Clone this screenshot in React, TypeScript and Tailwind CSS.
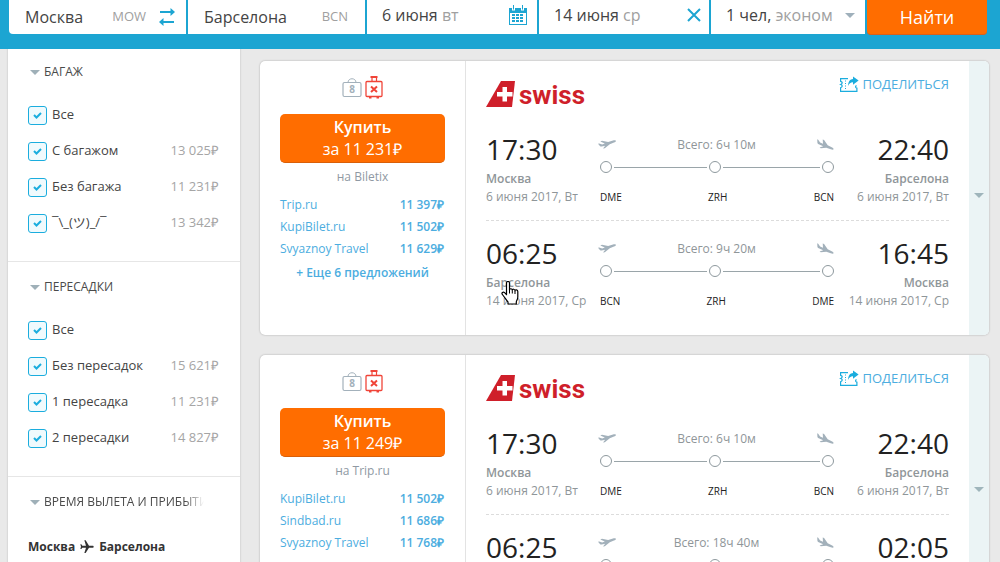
import clsx from 'clsx'
import React from 'react'
import { MdFlight } from 'react-icons/md'

interface FilterOption {
  label: string
  price?: string
}

interface Offer {
  agency: string
  price: string
}

interface Leg {
  departTime: string
  departCity: string
  arriveTime: string
  arriveCity: string
  date: string
  duration: string
  codes: [string, string, string]
}

interface Ticket {
  price: string
  agency: string
  offers: Offer[]
  more?: string
  legs: Leg[]
}

const baggageOptions: FilterOption[] = [
  { label: 'Все' },
  { label: 'С багажом', price: '13\u2005025₽' },
  { label: 'Без багажа', price: '11\u2005231₽' },
  { label: '¯\\_(ツ)_/¯', price: '13\u2005342₽' },
]

const stopOptions: FilterOption[] = [
  { label: 'Все' },
  { label: 'Без пересадок', price: '15\u2005621₽' },
  { label: '1 пересадка', price: '11\u2005231₽' },
  { label: '2 пересадки', price: '14\u2005827₽' },
]

const outbound: Leg = {
  departTime: '17:30',
  departCity: 'Москва',
  arriveTime: '22:40',
  arriveCity: 'Барселона',
  date: '6 июня 2017, Вт',
  duration: '6ч 10м',
  codes: ['DME', 'ZRH', 'BCN'],
}

const inbound: Leg = {
  departTime: '06:25',
  departCity: 'Барселона',
  arriveTime: '16:45',
  arriveCity: 'Москва',
  date: '14 июня 2017, Ср',
  duration: '9ч 20м',
  codes: ['BCN', 'ZRH', 'DME'],
}

const tickets: Ticket[] = [
  {
    price: '11\u2005231₽',
    agency: 'Biletix',
    offers: [
      { agency: 'Trip.ru', price: '11\u2005397₽' },
      { agency: 'KupiBilet.ru', price: '11\u2005502₽' },
      { agency: 'Svyaznoy Travel', price: '11\u2005629₽' },
    ],
    more: '+ Еще 6 предложений',
    legs: [outbound, inbound],
  },
  {
    price: '11\u2005249₽',
    agency: 'Trip.ru',
    offers: [
      { agency: 'KupiBilet.ru', price: '11\u2005502₽' },
      { agency: 'Sindbad.ru', price: '11\u2005686₽' },
      { agency: 'Svyaznoy Travel', price: '11\u2005768₽' },
    ],
    legs: [outbound, { ...inbound, arriveTime: '02:05', duration: '18ч 40м' }],
  },
]

const Caret: React.FC<{ className?: string }> = ({ className }) => (
  <svg viewBox="0 0 10 5" className={clsx('h-[5px] w-[10px] shrink-0', className)} fill="currentColor" aria-hidden="true">
    <path d="M0 0h10L5 5z" />
  </svg>
)

const SwapIcon = () => (
  <svg viewBox="0 0 18 18" className="h-[18px] w-[18px]" fill="currentColor" aria-hidden="true">
    <path d="M2 3h10.500V0l4.500 4-4.500 4V5H2zM16 15H5.500v3L1 14l4.500-4v3H16z" />
  </svg>
)

const CalendarIcon = () => (
  <svg viewBox="0 0 18 20" className="h-5 w-[18px]" aria-hidden="true">
    <path fill="currentColor" d="M0 3h3v2.500h3V3h6v2.500h3V3h3v17H0zM1 8v11h16V8z" fillRule="evenodd" />
    <path fill="currentColor" d="M4 0h1v4.500H4zM13 0h1v4.500h-1z" />
    <path
      fill="currentColor"
      d="M3 9h3v2H3zM7 9h3v2H7zM11 9h3v2h-3zM3 12h3v2H3zM7 12h3v2H7zM11 12h3v2h-3zM3 15h3v2H3zM7 15h3v2H7zM11 15h3v2h-3z"
    />
  </svg>
)

const CrossIcon = () => (
  <svg viewBox="0 0 14 14" className="h-3.5 w-3.5" stroke="currentColor" strokeWidth="2" aria-hidden="true">
    <path d="M1 1l12 12M13 1L1 13" />
  </svg>
)

const HandBagIcon = () => (
  <svg viewBox="0 0 20 22" className="h-[22px] w-5 text-[#a3b1bb]" fill="none" stroke="currentColor" aria-hidden="true">
    <rect x="1" y="6.500" width="18" height="14" rx="1.500" strokeWidth="1.200" />
    <path d="M6 6.500c0-5 8-5 8 0" />
    <text x="10" y="17" textAnchor="middle" stroke="none" fill="currentColor" className="font-['Open_Sans',sans-serif] text-[10px] font-bold">
      8
    </text>
  </svg>
)

const NoLuggageIcon = () => (
  <svg viewBox="0 0 18 23" className="h-[23px] w-[18px] text-[#f04438]" fill="none" stroke="currentColor" aria-hidden="true">
    <rect x="1" y="5.500" width="16" height="15" rx="1" strokeWidth="1.300" />
    <path d="M5.500 1h7" strokeWidth="2" />
    <path d="M7 1.500v4M11.500 1.500v4" strokeWidth="1.200" />
    <path d="M4 21.500h2.500M11.500 21.500H14" strokeWidth="2" />
    <path d="M6 10.500l6 5.500M12 10.500L6 16" strokeWidth="2" />
  </svg>
)

const ShareIcon = () => (
  <svg viewBox="0 0 20 17" className="h-[17px] w-5 text-[#1badde]" fill="none" stroke="currentColor" aria-hidden="true">
    <path
      d="M9 2.600H1.600v2.700c2.200.6 2.200 2.500 0 3.200 2.200.7 2.200 2.500 0 3.200v3.700h16.300v-3.200c-1.700-.5-1.700-1.800-.4-2.600"
      strokeWidth="1.200"
    />
    <path d="M6.500 4.500v9" strokeDasharray="1 1.500" />
    <path d="M9 10c.2-4.500 2.200-6.800 5-6.900V.4l5.600 4.200L14 8.700V6.300c-2.200-.1-3.800 1-5 3.700z" fill="currentColor" stroke="none" />
  </svg>
)

const TakeoffIcon = () => (
  <svg viewBox="0 0 18 10" className="h-2.5 w-[18px] text-[#a3b1bb]" fill="currentColor" aria-hidden="true">
    <path d="M0 3.700l1.200-.3 3 1 2.600-.9L2.300 1.400 4 .8l6.200 1.300L15 .6c1.500-.5 2.900-.3 3 .2.100.6-.7 1.200-2 1.700l-4.200 1.800-5 4L5 8.600l2.200-2.900-3.500.8c-.8.200-1.400 0-1.800-.5z" />
  </svg>
)

const LandingIcon = () => (
  <svg viewBox="0 0 17 12" className="h-3 w-[17px] text-[#a3b1bb]" fill="currentColor" aria-hidden="true">
    <path d="M.2.300l1 .4 1.900 2.700 2.900 1.300L5.700.400l1.400.7 3.600 5.200 4 1.900c1.400.7 2.100 1.600 1.900 2.100-.2.500-1.500.5-2.800 0L9.300 8.700l-5.500.5-1.200-.8 3.600-1.200-4.500-2C.8 4.800.4 4.200.4 3.400z" />
  </svg>
)

const SwissLogo = () => (
  <div className="flex h-[26px] items-center gap-1 text-[#cf1f2a]">
    <svg viewBox="0 0 29 26" className="h-[26px] w-[29px]" aria-hidden="true">
      <path fill="currentColor" d="M15 0h14l-3 26H0z" />
      <path fill="#fff" d="M16.500 6h4.500v5h5.500v4.500H21v5h-4.500v-5H11V11h5.500z" />
    </svg>
    <span className="pt-0.5 font-[Roboto,sans-serif] text-[26px] leading-[26px] font-bold">swiss</span>
  </div>
)

const HandCursor = () => (
  <svg viewBox="0 0 18 24" className="pointer-events-none absolute top-[281px] left-[501px] h-6 w-[18px]" aria-hidden="true">
    <path
      d="M5.500 2c0-2 3-2 3 0v7c0-1.700 2.800-1.700 2.800.2 0-1.400 2.700-1.400 2.700.6 0-1.400 2.800-1.200 2.800.8v5.400c0 2.500-1.300 3.500-1.500 5v2H7v-2c-1.700-1.800-3-4.200-5.600-7.500-1.400-1.700.8-3.200 2.200-1.800l1.900 2z"
      fill="#fff"
      stroke="#000"
      strokeWidth="1.200"
      strokeLinejoin="round"
    />
    <path d="M8.500 9v3.500M11.300 9.500v3M14 10v3" stroke="#000" />
  </svg>
)

const SearchBar = () => {
  const cell = 'flex h-[34px] min-w-0 items-center bg-white text-base text-[#444]'
  const input = 'min-w-0 flex-1 bg-transparent leading-6 outline-none'

  return (
    <header className="relative z-10 bg-[#1ca5d2] pr-[13px] pb-3.5 pl-[9px]">
      <form className="grid grid-cols-[177fr_177fr_170fr_170fr_154fr_120fr] gap-0.5" onSubmit={(e) => e.preventDefault()}>
        <div className={clsx(cell, 'rounded-bl-sm pr-2.5 pl-4')}>
          <input className={input} defaultValue="Москва" aria-label="Город вылета" />
          <span className="text-[13px] text-[#a0a0a0]">MOW</span>
          <button type="button" className="ml-3 text-[#1ca5d2]" aria-label="Поменять местами">
            <SwapIcon />
          </button>
        </div>
        <div className={clsx(cell, 'pr-[17px] pl-4')}>
          <input className={input} defaultValue="Барселона" aria-label="Город прибытия" />
          <span className="text-[13px] text-[#a0a0a0]">BCN</span>
        </div>
        <button type="button" className={clsx(cell, 'justify-between pr-2.5 pb-1 pl-[15px]')}>
          <span>
            6 июня <span className="text-[#a0a0a0]">вт</span>
          </span>
          <span className="text-[#1ca5d2]">
            <CalendarIcon />
          </span>
        </button>
        <div className={clsx(cell, 'justify-between pr-2 pb-1 pl-[15px]')}>
          <button type="button">
            14 июня <span className="text-[#a0a0a0]">ср</span>
          </button>
          <button type="button" className="text-[#1ca5d2]" aria-label="Очистить дату">
            <CrossIcon />
          </button>
        </div>
        <button type="button" className={clsx(cell, 'justify-between pr-2.5 pb-1 pl-[15px]')}>
          <span>
            1 чел, <span className="text-[#a0a0a0]">эконом</span>
          </span>
          <Caret className="text-[#9fb0bb]" />
        </button>
        <button type="submit" className="h-[35px] rounded-b-sm border-b border-[#d9601a] bg-[#ff6d00] text-lg font-medium text-white">
          Найти
        </button>
      </form>
    </header>
  )
}

const FilterHeading: React.FC<{ title: string; faded?: boolean }> = ({ title, faded }) => (
  <h2>
    <button type="button" className="flex w-full items-center gap-1 pl-0.5 text-xs leading-5 font-medium text-[#4a4a4a]">
      <Caret className="text-[#9fb0b8]" />
      <span
        className={clsx(
          'overflow-hidden whitespace-nowrap',
          faded && 'w-40 [mask-image:linear-gradient(to_right,black_88%,transparent)]',
        )}
      >
        {title}
      </span>
    </button>
  </h2>
)

const FilterGroup: React.FC<{ title: string; options: FilterOption[] }> = ({ title, options }) => (
  <section className="border-b border-[#e6e6e6] px-5 pt-[15px] pb-5">
    <FilterHeading title={title} />
    <ul className="pt-[15px]">
      {options.map((option) => (
        <li key={option.label}>
          <label className="flex h-9 items-center text-[13px] text-[#444]">
            <span className="mr-[5px] grid place-items-center">
              <input
                type="checkbox"
                defaultChecked
                className="peer col-start-1 row-start-1 h-[19px] w-[19px] appearance-none rounded-[3px] border border-[#1badde] bg-[#f0fafd]"
              />
              <svg
                viewBox="0 0 9 7"
                className="pointer-events-none invisible col-start-1 row-start-1 h-[7px] w-[9px] text-[#1badde] peer-checked:visible"
                fill="none"
                stroke="currentColor"
                strokeWidth="2"
                aria-hidden="true"
              >
                <path d="M1 3l2.500 2.500L8 1" />
              </svg>
            </span>
            <span className="flex-1">{option.label}</span>
            {option.price && <span className="pr-px text-[#a5a5a5]">{option.price}</span>}
          </label>
        </li>
      ))}
    </ul>
  </section>
)

const Sidebar = () => (
  <aside className="-mt-0.5 w-[232px] shrink-0 bg-white shadow-[0_0_2px_rgba(0,0,0,0.2)]">
    <FilterGroup title="БАГАЖ" options={baggageOptions} />
    <FilterGroup title="ПЕРЕСАДКИ" options={stopOptions} />
    <section className="px-5 pt-[15px] pb-5">
      <FilterHeading title="ВРЕМЯ ВЫЛЕТА И ПРИБЫТИЯ" faded />
      <h3 className="flex items-center gap-1 pt-[15px] text-xs leading-10 font-bold text-[#333]">
        Москва
        <MdFlight className="h-4 w-4 rotate-90" />
        Барселона
      </h3>
    </section>
  </aside>
)

const Stop = () => <span className="h-3 w-3 rounded-full border border-[#8e999e]" />

const FlightLeg: React.FC<{ leg: Leg }> = ({ leg }) => (
  <div className="flex text-xs leading-[18px] text-[#8f9699]">
    <div className="w-28 whitespace-nowrap">
      <div className="h-10 text-[28px] leading-[38px] text-[#222]">{leg.departTime}</div>
      <div className="font-semibold">{leg.departCity}</div>
      <div>{leg.date}</div>
    </div>
    <div className="min-w-0 flex-1">
      <div className="mt-[5px] flex h-5 items-center justify-between">
        <TakeoffIcon />
        <span>Всего: {leg.duration}</span>
        <LandingIcon />
      </div>
      <div className="mt-[3px] flex h-[18px] items-center gap-0.5 pl-0.5">
        <Stop />
        <span className="h-px flex-[94] bg-[#9aa5a9]" />
        <Stop />
        <span className="h-px flex-[98] bg-[#9aa5a9]" />
        <Stop />
      </div>
      <div className="mt-3 flex justify-between pl-0.5 text-[10px] font-medium text-[#222]">
        {leg.codes.map((code) => (
          <span key={code}>{code}</span>
        ))}
      </div>
    </div>
    <div className="w-[115px] text-right whitespace-nowrap">
      <div className="h-10 text-[28px] leading-[38px] text-[#222]">{leg.arriveTime}</div>
      <div className="font-semibold">{leg.arriveCity}</div>
      <div>{leg.date}</div>
    </div>
  </div>
)

const TicketCard: React.FC<{ ticket: Ticket }> = ({ ticket }) => (
  <article className="flex overflow-hidden rounded-[5px] bg-white shadow-[0_0_2px_rgba(0,0,0,0.3)]">
    <div className="w-[206px] shrink-0 border-r border-[#e3e3e3] px-5 pt-3.5 text-xs text-[#4cade0]">
      <div className="flex h-6 items-center justify-center gap-[3px]">
        <HandBagIcon />
        <NoLuggageIcon />
      </div>
      <button
        type="button"
        className="mt-[15px] h-[49px] w-full rounded-[5px] border-b border-[#d95f08] bg-[#ff6d00] text-base leading-[22px] text-white"
      >
        <span className="block font-semibold">Купить</span>
        <span className="block font-medium">за {ticket.price}</span>
      </button>
      <p className="mt-1 text-center leading-5 text-[#8f99a3]">на {ticket.agency}</p>
      <ul className="mt-[7px]">
        {ticket.offers.map((offer) => (
          <li key={offer.agency}>
            <a href="#" className="flex justify-between pr-px leading-[22px]">
              <span>{offer.agency}</span>
              <span className="font-semibold">{offer.price}</span>
            </a>
          </li>
        ))}
      </ul>
      {ticket.more && (
        <a href="#" className="block pt-0.5 text-center leading-[22px] font-semibold">
          {ticket.more}
        </a>
      )}
    </div>
    <div className="min-w-0 flex-1 px-5 pt-5 pb-[25px]">
      <div className="mb-[23px] flex justify-between">
        <SwissLogo />
        <button type="button" className="-mt-[7px] flex items-center gap-[3px] self-start text-[13px] leading-5 text-[#4cade0]">
          <ShareIcon />
          ПОДЕЛИТЬСЯ
        </button>
      </div>
      {ticket.legs.map((leg, index) => (
        <div key={leg.departTime} className={clsx(index > 0 && 'mt-3.5 border-t border-dashed border-[#dcdcdc] pt-[13px]')}>
          <FlightLeg leg={leg} />
        </div>
      ))}
    </div>
    <button
      type="button"
      className="flex w-5 shrink-0 items-center justify-center bg-[#ebf4f5] pb-1.5 text-[#9fb5bb]"
      aria-label="Показать детали"
    >
      <Caret />
    </button>
  </article>
)

export default function App() {
  return (
    <div className="relative h-screen overflow-hidden bg-[#e9e9e9] font-['Open_Sans','Noto_Sans_CJK_JP',sans-serif]">
      <SearchBar />
      <div className="flex items-start gap-5 pr-[11px] pl-2">
        <Sidebar />
        <main className="flex min-w-0 flex-1 flex-col gap-5 pt-3">
          {tickets.map((ticket) => (
            <TicketCard key={ticket.price} ticket={ticket} />
          ))}
        </main>
      </div>
      <HandCursor />
    </div>
  )
}
